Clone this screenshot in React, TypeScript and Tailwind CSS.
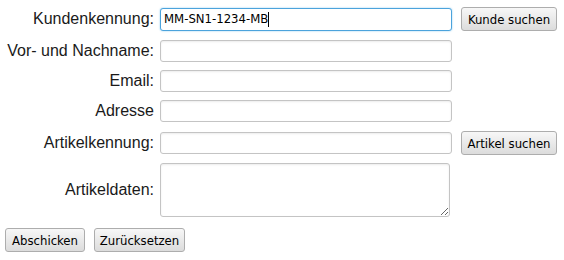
import React from "react";

const labelCls =
  "w-[154px] shrink-0 text-right text-[16px] leading-none text-[#1a1a1a] [font-family:'Liberation_Sans',Arial,sans-serif]";
const inputCls =
  "ml-[6px] w-[292px] h-[22px] rounded-[3px] border border-[#c4c4c4] bg-white shadow-[inset_0_1px_2px_rgba(0,0,0,0.08)] px-[3px] text-[13px] text-black outline-none [font-family:'DejaVu_Sans_Condensed','DejaVu_Sans',sans-serif]";
const btnCls =
  "h-[24px] rounded-[3px] border border-[#adadad] bg-[linear-gradient(#f7f7f7,#dcdcdc)] px-[4px] text-[13px] leading-none text-black [font-family:'DejaVu_Sans_Condensed','DejaVu_Sans',sans-serif] whitespace-nowrap";

export default function App() {
  return (
    <div className="w-[564px] h-[260px] bg-white pt-[7px] overflow-hidden">
      <div className="flex items-center h-[24px]">
        <span className={labelCls}>Kundenkennung:</span>
        <div className="ml-[6px] w-[292px] h-[23px] rounded-[3px] border border-[#4ba3dc] shadow-[0_0_2px_#8ccaf0] bg-white flex items-center px-[3px] text-[13px] text-black [font-family:'DejaVu_Sans_Condensed','DejaVu_Sans',sans-serif]">
          <span>MM-SN1-1234-MB</span>
          <span className="w-px h-[15px] bg-black" />
        </div>
        <button className={btnCls + " ml-[9px] w-[96px]"}>Kunde suchen</button>
      </div>
      <div className="flex items-center h-[24px] mt-[8px]">
        <span className={labelCls}>Vor- und Nachname:</span>
        <input className={inputCls} />
      </div>
      <div className="flex items-center h-[24px] mt-[6px]">
        <span className={labelCls}>Email:</span>
        <input className={inputCls} />
      </div>
      <div className="flex items-center h-[24px] mt-[6px]">
        <span className={labelCls}>Adresse</span>
        <input className={inputCls} />
      </div>
      <div className="flex items-center h-[24px] mt-[8px]">
        <span className={labelCls}>Artikelkennung:</span>
        <input className={inputCls} />
        <button className={btnCls + " ml-[9px] w-[96px]"}>Artikel suchen</button>
      </div>
      <div className="flex items-center h-[54px] mt-[8px]">
        <span className={labelCls}>Artikeldaten:</span>
        <textarea className="ml-[6px] w-[290px] h-[54px] rounded-[3px] border border-[#c4c4c4] bg-white shadow-[inset_0_1px_2px_rgba(0,0,0,0.08)] outline-none block" />
      </div>
      <div className="flex items-center mt-[11px] pl-[5px] gap-[9px]">
        <button className={btnCls + " w-[80px]"}>Abschicken</button>
        <button className={btnCls + " w-[91px]"}>Zurücksetzen</button>
      </div>
    </div>
  );
}
